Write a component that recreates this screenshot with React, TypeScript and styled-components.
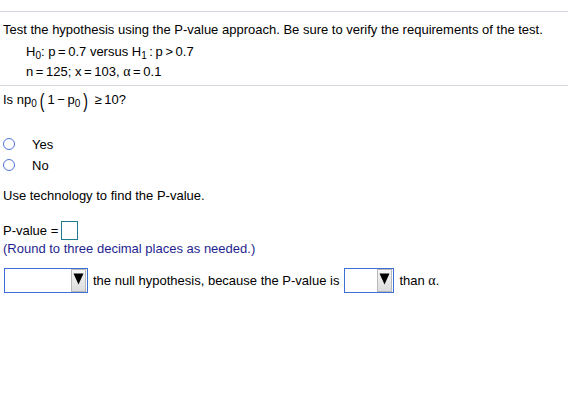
import React from "react";
import styled, { createGlobalStyle } from "styled-components";

const Global = createGlobalStyle`
  html, body { margin: 0; padding: 0; background: #fff; }
  body { font-family: "Liberation Sans", Arial, sans-serif; font-size: 13px; color: #000; }
`;

const Page = styled.div`
  padding-top: 11px;
  width: 568px;
`;

const Rule = styled.div`
  height: 0;
  border-top: 1px solid #d3d6de;
`;

const Section = styled.div<{ $pt?: number; $pb?: number }>`
  padding: ${(p) => p.$pt ?? 0}px 0 ${(p) => p.$pb ?? 0}px 3px;
`;

const Line = styled.div<{ $mt?: number; $indent?: number; $lh?: number }>`
  margin-top: ${(p) => p.$mt ?? 0}px;
  padding-left: ${(p) => p.$indent ?? 0}px;
  line-height: ${(p) => p.$lh ?? 15}px;
  white-space: nowrap;
  display: flex;
  align-items: center;
`;

const Sub = styled.sub`
  font-size: 10px;
  vertical-align: -3px;
  line-height: 0;
`;

const Greek = styled.span`
  font-family: "Liberation Serif", "Times New Roman", serif;
  font-size: 14px;
`;

const Paren = styled.span`
  display: inline-block;
  font-size: 14px;
  line-height: 15px;
  margin: 0 3px;
  transform: scaleY(1.4);
  position: relative;
  top: 1px;
`;

const RadioList = styled.div`
  margin-top: 28px;
  display: flex;
  flex-direction: column;
  gap: 7px;
`;

const RadioRow = styled.label`
  display: flex;
  align-items: center;
  height: 14px;
`;

const RadioCircle = styled.span`
  width: 10px;
  height: 10px;
  border: 1px solid #4f72d9;
  border-radius: 50%;
  margin-right: 17px;
  box-sizing: content-box;
`;

const Blank = styled.span`
  display: inline-block;
  width: 15px;
  height: 17px;
  border: 1px solid #1c7c8e;
  margin-left: 3px;
`;

const Hint = styled.div`
  color: #1f1f8f;
  line-height: 15px;
  margin-top: 1px;
`;

const Select = styled.span<{ $w: number }>`
  display: inline-flex;
  justify-content: flex-end;
  align-items: center;
  width: ${(p) => p.$w}px;
  height: 25px;
  border: 1px solid #3b6fd6;
  box-sizing: border-box;
  background: #fff;
  padding-right: 1px;
`;

const ArrowBtn = styled.span`
  width: 15px;
  height: 23px;
  box-sizing: border-box;
  border: 1px solid #b8b8b8;
  background: linear-gradient(#f6f6f6, #dcdcdc);
  display: flex;
  align-items: flex-start;
  justify-content: center;
  padding-top: 3px;
`;

const SentenceRow = styled.div`
  margin-top: 12px;
  padding-left: 4px;
  display: flex;
  align-items: center;
  gap: 5px;
  white-space: nowrap;
`;

const Tri = () => (
  <svg width="11" height="12" viewBox="0 0 11 12">
    <polygon points="0.5,0.5 10.5,0.5 5.5,11.5" fill="#000" />
  </svg>
);

export default function App() {
  return (
    <>
      <Global />
      <Page>
        <Rule />
        <Section $pt={10} $pb={6}>
          <Line>Test the hypothesis using the P-value approach. Be sure to verify the requirements of the test.</Line>
          <Line $mt={7} $indent={23}>
            <span>
              H<Sub>0</Sub>: p&#8201;=&#8201;0.7 versus H<Sub>1</Sub>&#8201;:&#8201;p&#8201;&gt;&#8201;0.7
            </span>
          </Line>
          <Line $mt={5} $indent={23}>
            <span>
              n&#8201;=&#8201;125; x&#8201;=&#8201;103, <Greek>α</Greek>&#8201;=&#8201;0.1
            </span>
          </Line>
        </Section>
        <Rule />
        <Section $pt={5}>
          <Line $lh={18}>
            <span>
              Is np<Sub>0</Sub>
            </span>
            <Paren>(</Paren>
            <span>
              1&#8201;−&#8201;p<Sub>0</Sub>
            </span>
            <Paren>)</Paren>
            <span>&nbsp;≥&#8201;10?</span>
          </Line>
          <RadioList>
            <RadioRow>
              <RadioCircle />
              Yes
            </RadioRow>
            <RadioRow>
              <RadioCircle />
              No
            </RadioRow>
          </RadioList>
          <Line $mt={16}>Use technology to find the P-value.</Line>
          <Line $mt={18} $lh={19}>
            P-value =<Blank />
          </Line>
          <Hint>(Round to three decimal places as needed.)</Hint>
        </Section>
        <SentenceRow>
          <Select $w={84}>
            <ArrowBtn>
              <Tri />
            </ArrowBtn>
          </Select>
          <span>the null hypothesis, because the P-value is</span>
          <Select $w={50}>
            <ArrowBtn>
              <Tri />
            </ArrowBtn>
          </Select>
          <span>
            than <Greek>α</Greek>.
          </span>
        </SentenceRow>
      </Page>
    </>
  );
}
